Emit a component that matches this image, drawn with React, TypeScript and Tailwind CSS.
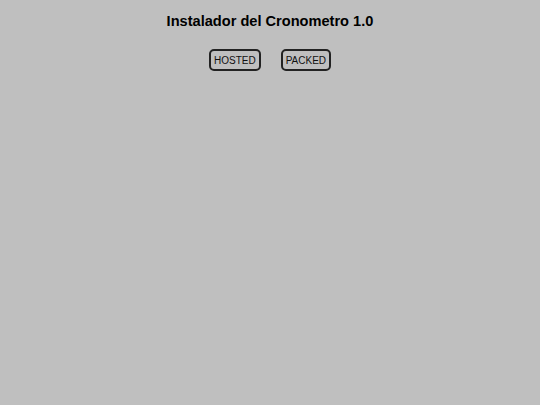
export default function App() {
  return (
    <div className="min-h-[405px] w-full bg-[#bfbfbf] font-['Liberation_Sans',Arial,sans-serif] text-black">
      <h1 className="pt-[12px] text-center text-[14.6px] font-bold leading-[18px]">
        Instalador del Cronometro 1.0
      </h1>
      <div className="mt-[19px] flex justify-center gap-[20px]">
        <button
          type="button"
          className="h-[22px] rounded-[5px] border-2 border-[#222] px-[3px] pt-[1px] text-[10px] leading-none text-[#111]"
        >
          HOSTED
        </button>
        <button
          type="button"
          className="h-[22px] rounded-[5px] border-2 border-[#222] px-[3px] pt-[1px] text-[10px] leading-none text-[#111]"
        >
          PACKED
        </button>
      </div>
    </div>
  );
}
